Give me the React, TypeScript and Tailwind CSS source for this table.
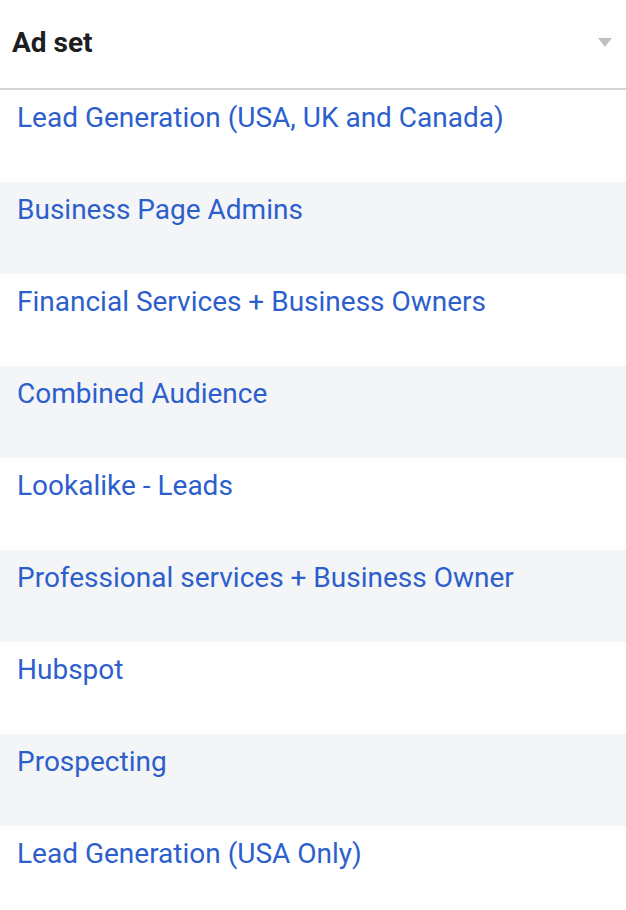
import React from 'react';

const adSets: string[] = [
  'Lead Generation (USA, UK and Canada)',
  'Business Page Admins',
  'Financial Services + Business Owners',
  'Combined Audience',
  'Lookalike - Leads',
  'Professional services + Business Owner',
  'Hubspot',
  'Prospecting',
  'Lead Generation (USA Only)',
];

const App: React.FC = () => {
  return (
    <div className="w-[626px] h-[910px] overflow-hidden bg-white font-['Roboto',sans-serif]">
      {/* header */}
      <div className="h-[90px] flex items-center justify-between pl-[12px] pr-[14px] border-b-2 border-[#d2d2d2]">
        <span className="text-[28px] font-bold text-[#1c1e21] mb-[3px]">Ad set</span>
        <svg width="14" height="9" viewBox="0 0 14 9" className="mb-[4px]">
          <path d="M0 0 H14 L7 9 Z" fill="#bcc0c4" />
        </svg>
      </div>

      {adSets.map((name, i) => (
        <div
          key={name}
          className={`h-[92px] px-[17px] pt-[10px] ${i % 2 === 1 ? 'bg-[#f4f5f7]' : 'bg-white'}`}
        >
          <span className="text-[28px] leading-[36px] text-[#2d5fcc]">{name}</span>
        </div>
      ))}
    </div>
  );
};

export default App;
